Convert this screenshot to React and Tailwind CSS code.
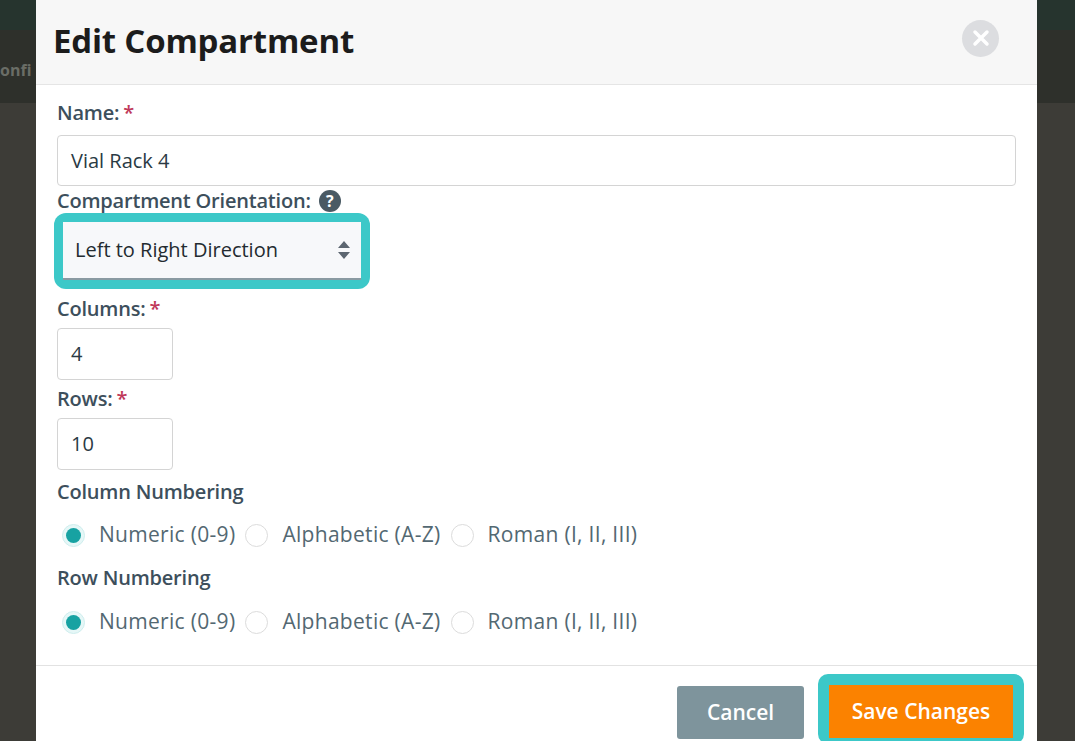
export default function App() {
  const f = { fontFamily: '"Open Sans","Noto Sans",sans-serif' };
  const Radio = ({ on, label }) => (
    <label className="flex items-center mr-[10px]">
      <span className={`w-[23px] h-[23px] rounded-full border flex items-center justify-center ${on ? "border-[#cfeeee] bg-[#e6f7f7]" : "border-[#dcdcdc] bg-white"}`}>
        {on && <span className="w-[15px] h-[15px] rounded-full bg-[#17a2a2]" />}
      </span>
      <span className="ml-[14px] text-[21px] text-[#536872] tracking-[0.3px]">{label}</span>
    </label>
  );
  const Radios = () => (
    <div className="flex items-center h-[30px] pl-[5px]">
      <Radio on label="Numeric (0-9)" />
      <Radio label="Alphabetic (A-Z)" />
      <Radio label="Roman (I, II, III)" />
    </div>
  );
  const Label = ({ children, req }) => (
    <div className="text-[20px] font-semibold text-[#3d4f5c] leading-[26px] tracking-[-0.2px]">
      {children}{req && <span className="text-[#c0395a] ml-1">*</span>}
    </div>
  );
  return (
    <div style={f} className="w-[1075px] h-[741px] overflow-hidden flex bg-[#3d3c37]">
      <div className="w-[36px] flex flex-col overflow-hidden">
        <div className="h-[30px] bg-[#26342e]" />
        <div className="h-[73px] bg-[#2e302b] text-[#6a6d66] font-bold text-[16px] pt-[28px] whitespace-nowrap">onfi</div>
      </div>
      <div className="w-[1001px] bg-white flex flex-col">
        <div className="h-[85px] bg-[#f7f7f7] border-b border-[#e5e5e5] flex items-center justify-between pl-[17px] pr-[38px]">
          <div className="text-[33px] font-bold text-[#1c1c1c] -mt-[3px] tracking-[-0.2px]">Edit Compartment</div>
          <div className="w-[37px] h-[37px] rounded-full bg-[#dcdde0] flex items-center justify-center -mt-[8px]">
            <svg width="18" height="18" viewBox="0 0 18 18"><path d="M3 3L15 15M15 3L3 15" stroke="white" strokeWidth="3.5" strokeLinecap="round" /></svg>
          </div>
        </div>
        <div className="pl-[21px] pr-[21px] pt-[15px] flex-1">
          <Label req>Name:</Label>
          <div className="mt-[9px] h-[51px] border border-[#d4d4d4] rounded-[4px] flex items-center px-[13px] text-[20px] text-[#2a3a44]">Vial Rack 4</div>
          <div className="mt-[2px] flex items-center">
            <Label>Compartment Orientation:</Label>
            <span className="ml-[8px] w-[22px] h-[22px] rounded-full bg-[#4a5a64] text-white text-[16px] font-bold flex items-center justify-center">?</span>
          </div>
          <div className="-mt-[1px] ml-[-3px] w-[316px] h-[76px] rounded-[12px] bg-[#3cc8c8] p-[9px]">
            <div className="h-full bg-[#f7f8fa] border-b-2 border-[#8a9aa2] flex items-center justify-between pl-[12px] pr-[10px] text-[20px] text-[#232b30]">
              Left to Right Direction
              <svg width="14" height="20" viewBox="0 0 14 20"><path d="M7 1L13 8H1Z M7 19L13 12H1Z" fill="#5c6670" /></svg>
            </div>
          </div>
          <div className="mt-[7px]"><Label req>Columns:</Label></div>
          <div className="mt-[6px] w-[116px] h-[52px] border border-[#d4d4d4] rounded-[4px] flex items-center px-[13px] text-[20px] text-[#2a3a44]">4</div>
          <div className="mt-[6px]"><Label req>Rows:</Label></div>
          <div className="mt-[6px] w-[116px] h-[52px] border border-[#d4d4d4] rounded-[4px] flex items-center px-[13px] text-[20px] text-[#2a3a44]">10</div>
          <div className="mt-[9px]"><Label>Column Numbering</Label></div>
          <div className="mt-[15px]"><Radios /></div>
          <div className="mt-[15px]"><Label>Row Numbering</Label></div>
          <div className="mt-[16px]"><Radios /></div>
        </div>
        <div className="h-[76px] border-t border-[#e2e2e2] flex items-start justify-end pr-[13px] pt-[8px] gap-[14px]">
          <div className="mt-[12px] w-[127px] h-[53px] rounded-[3px] bg-[#7e949c] text-white text-[21px] font-semibold flex items-center justify-center">Cancel</div>
          <div className="w-[206px] h-[70px] rounded-[10px] bg-[#3cc8c8] p-[11px]">
            <div className="h-[53px] bg-[#fb8200] text-white text-[21px] font-semibold flex items-center justify-center">Save Changes</div>
          </div>
        </div>
      </div>
      <div className="flex-1 flex flex-col">
        <div className="h-[30px] bg-[#26342e]" />
        <div className="h-[73px] bg-[#2e302b]" />
      </div>
    </div>
  );
}
